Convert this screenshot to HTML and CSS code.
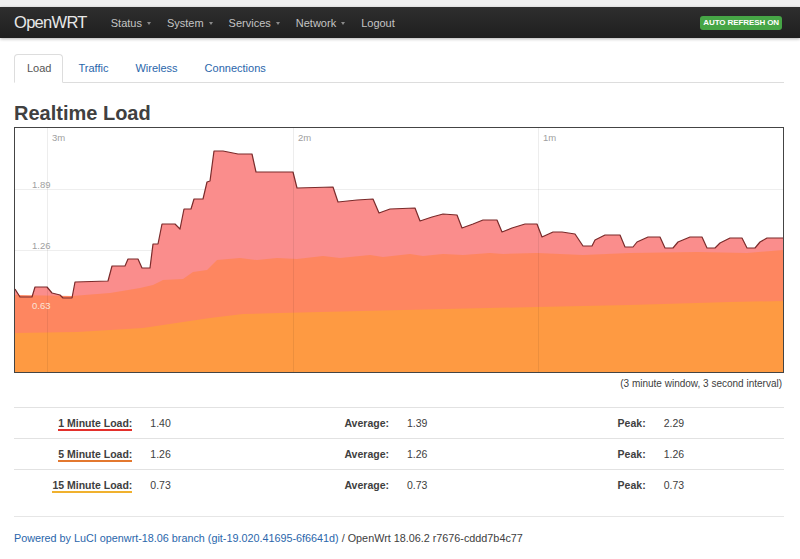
FILE: index.html
```html
<!DOCTYPE html>
<html lang="en">
<head>
<meta charset="utf-8">
<title>OpenWRT - Realtime Load</title>
<link rel="stylesheet" href="styles.css">
</head>
<body>
<div class="top-strip"></div>
<header class="topbar">
  <a class="brand" href="#">OpenWRT</a>
  <nav class="nav">
    <a href="#" class="nav-item">Status<span class="caret"></span></a>
    <a href="#" class="nav-item">System<span class="caret"></span></a>
    <a href="#" class="nav-item">Services<span class="caret"></span></a>
    <a href="#" class="nav-item">Network<span class="caret"></span></a>
    <a href="#" class="nav-item">Logout</a>
  </nav>
  <span class="badge">AUTO REFRESH ON</span>
</header>

<main class="main">
  <ul class="tabs">
    <li class="tab active"><a href="#">Load</a></li>
    <li class="tab"><a href="#">Traffic</a></li>
    <li class="tab"><a href="#">Wireless</a></li>
    <li class="tab"><a href="#">Connections</a></li>
  </ul>

  <h2 class="title">Realtime Load</h2>

  <div class="chart">
    <svg class="chart-svg" width="768" height="244" viewBox="15 128 768 244" xmlns="http://www.w3.org/2000/svg">
      <g class="hgrid">
        <line x1="15" y1="189.5" x2="783" y2="189.5"/>
        <line x1="15" y1="250.5" x2="783" y2="250.5"/>
        <line x1="15" y1="311.5" x2="783" y2="311.5"/>
      </g>
      <path class="area1" d="M15,372 L15,289 20,297 32,297 35,287 47,287 52,293 60,295 63,298 72,298 75,282 108,281 112,266 125,266 128,259 138,259 142,268 150,268 153,244 158,244 162,224 175,224 180,229 184,209 191,209 194,199 203,199 207,182 210,181 214,151 223,151 228,152 238,154 252,154 256,172 293,172 297,188 333,187 338,202 357,200 373,199 379,213 390,209 415,208 420,221 432,217 443,214 457,215 462,228 473,224 483,220 497,220 502,232 512,228 525,224 537,224 542,237 553,232 562,232 575,234 583,246 592,246 595,240 605,235 620,235 625,247 633,247 637,242 648,237 660,237 665,248 673,248 678,242 690,237 702,237 707,248 715,248 720,243 730,238 742,238 747,248 755,248 760,242 767,238 783,238 L783,372 Z"/>
      <path class="area5" d="M15,372 L15,295 72,296 110,293 140,288 153,285 163,280 183,279 193,272 207,270 217,260 240,258 257,260 277,258 297,259 323,256 340,258 370,255 383,257 410,254 423,256 443,254 463,255 490,253 503,254 537,253 583,255 630,253 697,252 747,253 783,250 L783,372 Z"/>
      <path class="area15" d="M15,372 L15,333 77,332 143,328 210,318 243,314 280,313 403,310 537,307 630,305 730,302 783,301 L783,372 Z"/>
      <path class="line1" d="M15,289 L20,297 32,297 35,287 47,287 52,293 60,295 63,298 72,298 75,282 108,281 112,266 125,266 128,259 138,259 142,268 150,268 153,244 158,244 162,224 175,224 180,229 184,209 191,209 194,199 203,199 207,182 210,181 214,151 223,151 228,152 238,154 252,154 256,172 293,172 297,188 333,187 338,202 357,200 373,199 379,213 390,209 415,208 420,221 432,217 443,214 457,215 462,228 473,224 483,220 497,220 502,232 512,228 525,224 537,224 542,237 553,232 562,232 575,234 583,246 592,246 595,240 605,235 620,235 625,247 633,247 637,242 648,237 660,237 665,248 673,248 678,242 690,237 702,237 707,248 715,248 720,243 730,238 742,238 747,248 755,248 760,242 767,238 783,238"/>
      <g class="vgrid">
        <line x1="47.5" y1="128" x2="47.5" y2="372"/>
        <line x1="293.5" y1="128" x2="293.5" y2="372"/>
        <line x1="538.5" y1="128" x2="538.5" y2="372"/>
      </g>
      <g class="axis">
        <text x="52" y="141">3m</text>
        <text x="298" y="141">2m</text>
        <text x="543" y="141">1m</text>
        <text x="32" y="188">1.89</text>
        <text x="32" y="249">1.26</text>
        <text x="32" y="309" class="axis-light">0.63</text>
      </g>
    </svg>
  </div>
  <div class="interval">(3 minute window, 3 second interval)</div>

  <table class="stats">
    <tr>
      <td class="lbl"><strong class="leg leg1">1 Minute Load:</strong></td>
      <td>1.40</td>
      <td class="lbl"><strong>Average:</strong></td>
      <td>1.39</td>
      <td class="lbl"><strong>Peak:</strong></td>
      <td>2.29</td>
    </tr>
    <tr>
      <td class="lbl"><strong class="leg leg5">5 Minute Load:</strong></td>
      <td>1.26</td>
      <td class="lbl"><strong>Average:</strong></td>
      <td>1.26</td>
      <td class="lbl"><strong>Peak:</strong></td>
      <td>1.26</td>
    </tr>
    <tr>
      <td class="lbl"><strong class="leg leg15">15 Minute Load:</strong></td>
      <td>0.73</td>
      <td class="lbl"><strong>Average:</strong></td>
      <td>0.73</td>
      <td class="lbl"><strong>Peak:</strong></td>
      <td>0.73</td>
    </tr>
  </table>

  <footer class="footer">
    <a href="#">Powered by LuCI openwrt-18.06 branch (git-19.020.41695-6f6641d)</a> / OpenWrt 18.06.2 r7676-cddd7b4c77
  </footer>
</main>
</body>
</html>
```

FILE: styles.css
```css
* { box-sizing: border-box; }

body {
  margin: 0;
  background: #fff;
  color: #404040;
  font-family: "Liberation Sans", Arial, Helvetica, sans-serif;
}

a { text-decoration: none; }

.top-strip {
  height: 7px;
  background: #efefef;
}

.topbar {
  height: 31px;
  display: flex;
  align-items: center;
  padding: 0 18px 0 14px;
  background: linear-gradient(#2e2e2e, #1f1f1f);
  box-shadow: 0 1px 3px rgba(0, 0, 0, 0.3);
}

.brand {
  color: #e8e8e8;
  font-size: 16.5px;
  letter-spacing: -0.7px;
  font-weight: normal;
}

.nav {
  display: flex;
  align-items: center;
  gap: 16px;
  margin-left: 24px;
}

.nav-item {
  color: #c4c4c4;
  font-size: 11px;
  display: inline-flex;
  align-items: center;
}

.caret {
  display: inline-block;
  width: 0;
  height: 0;
  margin-left: 5px;
  margin-top: 1px;
  border-left: 2.5px solid transparent;
  border-right: 2.5px solid transparent;
  border-top: 3px solid #8a8a8a;
}

.badge {
  margin-left: auto;
  background: #46a546;
  color: #fff;
  font-size: 8px;
  font-weight: bold;
  letter-spacing: -0.1px;
  line-height: 14px;
  height: 14px;
  padding: 0 3px;
  border-radius: 3px;
}

.main {
  padding: 0 16px 0 14px;
}

.tabs {
  list-style: none;
  margin: 16px 0 0;
  padding: 0;
  display: flex;
  border-bottom: 1px solid #ddd;
  height: 29px;
}

.tab {
  margin-right: 2px;
}

.tab a {
  display: block;
  height: 29px;
  line-height: 27px;
  padding: 0 11px 0 12px;
  font-size: 11px;
  color: #2a66ab;
  border: 1px solid transparent;
  border-radius: 4px 4px 0 0;
}

.tab.active a {
  color: #555;
  background: #fff;
  border-color: #ddd #ddd transparent;
}

.title {
  margin: 18px 0 2px;
  font-size: 20px;
  line-height: 24px;
  font-weight: bold;
  color: #404040;
}

.chart {
  border: 1px solid #444;
  height: 246px;
  width: 770px;
}

.chart-svg {
  display: block;
}

.hgrid line {
  stroke: #eeeeee;
  stroke-width: 1;
}

.vgrid line {
  stroke: rgba(0, 0, 0, 0.07);
  stroke-width: 1;
}

.area1 { fill: #fa8d8c; }
.area5 { fill: #fe8660; }
.area15 { fill: #fe9a42; }

.line1 {
  fill: none;
  stroke: #7a2b2b;
  stroke-width: 1.2;
  stroke-linejoin: round;
}

.axis text {
  font-family: "Liberation Sans", Arial, sans-serif;
  font-size: 9.5px;
  fill: #a0a0a0;
}

.axis .axis-light {
  fill: #fbe3d6;
}

.interval {
  margin-top: 4px;
  text-align: right;
  font-size: 10px;
  line-height: 14px;
  color: #404040;
  padding-right: 2px;
}

.stats {
  width: 100%;
  margin-top: 16px;
  border-collapse: collapse;
  table-layout: fixed;
  font-size: 10.5px;
  color: #404040;
}

.stats td {
  border-top: 1px solid #e2e2e2;
  height: 31px;
  padding: 0 8px;
  vertical-align: middle;
}

.stats td.lbl {
  text-align: right;
  padding-right: 10px;
}

.leg {
  white-space: nowrap;
  border-bottom: 2px solid;
}

.leg1 { border-bottom-color: #e3302b; }
.leg5 { border-bottom-color: #e3782f; }
.leg15 { border-bottom-color: #f0b12e; }

.footer {
  margin-top: 15px;
  border-top: 1px solid #e6e6e6;
  padding-top: 14px;
  font-size: 10.8px;
  line-height: 14px;
  color: #404040;
}

.footer a {
  color: #2a66ab;
}
```
